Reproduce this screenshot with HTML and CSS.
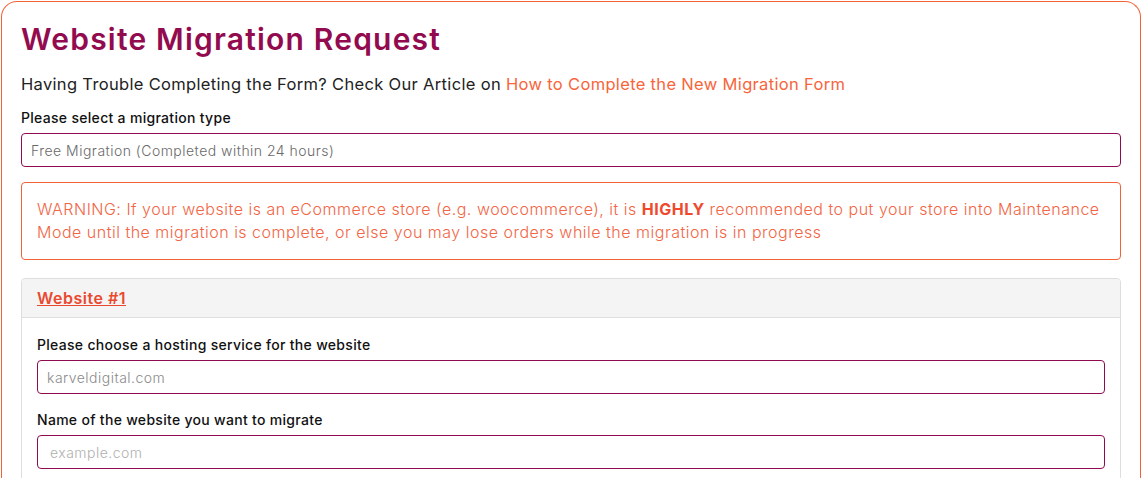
FILE: index.html
```html
<!DOCTYPE html>
<html lang="en">
<head>
<meta charset="utf-8">
<title>Website Migration Request</title>
<link rel="stylesheet" href="styles.css">
</head>
<body>
<div class="card">
  <h1 class="title">Website Migration Request</h1>
  <p class="intro">Having Trouble Completing the Form? Check Our Article on <a class="link" href="#">How to Complete the New Migration Form</a></p>
  <div class="field">
    <label class="label">Please select a migration type</label>
    <div class="control select-like">Free Migration (Completed within 24 hours)</div>
  </div>
  <div class="warning">WARNING: If your website is an eCommerce store (e.g. woocommerce), it is <b>HIGHLY</b> recommended to put your store into Maintenance Mode until the migration is complete, or else you may lose orders while the migration is in progress</div>
  <div class="panel">
    <div class="panel-head"><a class="panel-title" href="#">Website #1</a></div>
    <div class="panel-body">
      <div class="field">
        <label class="label">Please choose a hosting service for the website</label>
        <div class="control select-like host">karveldigital.com</div>
      </div>
      <div class="field">
        <label class="label">Name of the website you want to migrate</label>
        <input class="control input" type="text" placeholder="example.com">
      </div>
    </div>
  </div>
</div>
</body>
</html>
```
FILE: styles.css
```css
* { box-sizing: border-box; }
html, body { margin: 0; padding: 0; background: #fff; }
body {
  font-family: "Inter", "Open Sans", sans-serif;
  color: #222;
  overflow: hidden;
  height: 478px;
  letter-spacing: 0.35px;
}
.card {
  margin: 1px 3px 0 1px;
  border: 1px solid #f26236;
  border-bottom: none;
  border-radius: 16px 16px 0 0;
  padding: 19px 19px 40px 19px;
  min-height: 600px;
}
.title {
  margin: 0;
  font-size: 30px;
  font-weight: 600;
  color: #920b4f;
  line-height: 36px;
  letter-spacing: 1.2px;
}
.intro {
  margin: 16px 0 0;
  font-size: 16.5px;
  line-height: 22px;
  color: #222;
  letter-spacing: 0.33px;
}
.link { color: #f7653b; text-decoration: none; }
.field { display: flex; flex-direction: column; }
.intro + .field { margin-top: 13px; }
.label {
  font-size: 14px;
  font-weight: 500;
  color: #111;
  line-height: 20px;
  margin-bottom: 5px;
  letter-spacing: 0.3px;
}
.control {
  height: 34px;
  border: 1px solid #8e0b52;
  border-radius: 4px;
  padding: 0 9px;
  font-family: inherit;
  font-size: 14px;
  font-weight: 300;
  color: #6a6a6a;
  display: flex;
  align-items: center;
  background: #fff;
  width: 100%;
  letter-spacing: 0.48px;
}
.input { outline: none; padding: 0 12px; }
.input::placeholder { color: #b0b0b0; }
.host { color: #8a8a8a; }
.warning {
  margin-top: 15px;
  border: 1px solid #f26236;
  border-radius: 4px;
  padding: 15px 15px 15px 15px;
  font-size: 16px;
  line-height: 23px;
  font-weight: 300;
  color: #f26545;
  letter-spacing: 0.5px;
}
.warning b { font-weight: 700; color: #ef4a2e; }
.panel {
  margin-top: 18px;
  border: 1px solid #dedede;
  border-radius: 4px;
}
.panel-head {
  background: #f4f4f4;
  border-bottom: 1px solid #dedede;
  height: 39px;
  padding: 0 15px;
  display: flex;
  align-items: center;
  border-radius: 4px 4px 0 0;
}
.panel-title {
  font-size: 16px;
  font-weight: 600;
  color: #e9492f;
  text-decoration: underline;
  letter-spacing: 0.5px;
}
.panel-body {
  padding: 17px 15px 20px;
  display: flex;
  flex-direction: column;
  gap: 16px;
}
```
